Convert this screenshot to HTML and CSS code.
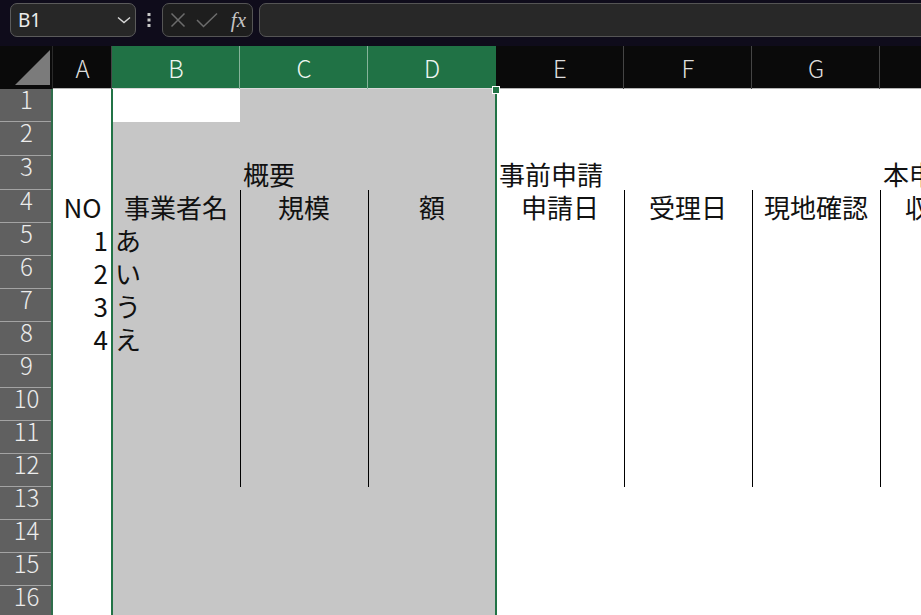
FILE: index.html
```html
<!DOCTYPE html>
<html lang="ja">
<head>
    <meta charset="UTF-8">
    <meta name="viewport" content="width=device-width, initial-scale=1.0">
    <title>Book1 - Excel</title>
    <link rel="stylesheet" href="styles.css">
</head>
<body>
    <div class="formula-bar">
        <div class="name-box">
            <span>B1</span>
            <svg class="chevron" width="14" height="8" viewBox="0 0 14 8"><path d="M1 1.5 L7 6.5 L13 1.5" fill="none" stroke="#d8d8d8" stroke-width="1.4"/></svg>
        </div>
        <div class="grip">
            <svg width="4" height="14" viewBox="0 0 4 14"><rect x="0.5" y="0" width="3" height="3" fill="#c9c9c9"/><rect x="0.5" y="5.5" width="3" height="3" fill="#c9c9c9"/><rect x="0.5" y="11" width="3" height="3" fill="#c9c9c9"/></svg>
        </div>
        <div class="fx-box">
            <svg width="16" height="16" viewBox="0 0 16 16"><path d="M1.5 1.5 L14.5 14.5 M14.5 1.5 L1.5 14.5" stroke="#6c6c6c" stroke-width="1.5"/></svg>
            <svg width="22" height="16" viewBox="0 0 22 16"><path d="M1 8 L7.5 14.5 L21 1.5" fill="none" stroke="#6c6c6c" stroke-width="1.5"/></svg>
            <span class="fx">fx</span>
        </div>
        <div class="formula-input"></div>
    </div>

    <div class="sheet">
        <table class="grid">
            <colgroup>
                <col class="w-head">
                <col class="w-a">
                <col class="w-col sel">
                <col class="w-col sel">
                <col class="w-col sel">
                <col class="w-col">
                <col class="w-col">
                <col class="w-col">
                <col class="w-col">
            </colgroup>
            <thead>
                <tr>
                    <th class="corner"><div class="corner-mark"></div></th>
                    <th>A</th>
                    <th class="on">B</th>
                    <th class="on">C</th>
                    <th class="on last-on">D</th>
                    <th>E</th>
                    <th>F</th>
                    <th>G</th>
                    <th>H</th>
                </tr>
            </thead>
            <tbody>
                <tr class="r-1"><th>1</th><td></td><td class="active"></td><td></td><td></td><td></td><td></td><td></td><td></td></tr>
                <tr class="r-2"><th>2</th><td></td><td></td><td></td><td></td><td></td><td></td><td></td><td></td></tr>
                <tr class="r-2"><th>3</th><td></td><td></td><td>概要</td><td></td><td>事前申請</td><td></td><td></td><td>本申請</td></tr>
                <tr><th>4</th><td class="mid">NO</td><td class="mid">事業者名</td><td class="mid bl">規模</td><td class="mid bl">額</td><td class="mid">申請日</td><td class="mid bl">受理日</td><td class="mid bl">現地確認</td><td class="mid bl">収受日</td></tr>
                <tr><th>5</th><td class="num">1</td><td>あ</td><td class="bl"></td><td class="bl"></td><td></td><td class="bl"></td><td class="bl"></td><td class="bl"></td></tr>
                <tr><th>6</th><td class="num">2</td><td>い</td><td class="bl"></td><td class="bl"></td><td></td><td class="bl"></td><td class="bl"></td><td class="bl"></td></tr>
                <tr><th>7</th><td class="num">3</td><td>う</td><td class="bl"></td><td class="bl"></td><td></td><td class="bl"></td><td class="bl"></td><td class="bl"></td></tr>
                <tr><th>8</th><td class="num">4</td><td>え</td><td class="bl"></td><td class="bl"></td><td></td><td class="bl"></td><td class="bl"></td><td class="bl"></td></tr>
                <tr><th>9</th><td></td><td></td><td class="bl"></td><td class="bl"></td><td></td><td class="bl"></td><td class="bl"></td><td class="bl"></td></tr>
                <tr><th>10</th><td></td><td></td><td class="bl"></td><td class="bl"></td><td></td><td class="bl"></td><td class="bl"></td><td class="bl"></td></tr>
                <tr><th>11</th><td></td><td></td><td class="bl"></td><td class="bl"></td><td></td><td class="bl"></td><td class="bl"></td><td class="bl"></td></tr>
                <tr><th>12</th><td></td><td></td><td class="bl"></td><td class="bl"></td><td></td><td class="bl"></td><td class="bl"></td><td class="bl"></td></tr>
                <tr><th>13</th><td></td><td></td><td></td><td></td><td></td><td></td><td></td><td></td></tr>
                <tr><th>14</th><td></td><td></td><td></td><td></td><td></td><td></td><td></td><td></td></tr>
                <tr><th>15</th><td></td><td></td><td></td><td></td><td></td><td></td><td></td><td></td></tr>
                <tr><th>16</th><td></td><td></td><td></td><td></td><td></td><td></td><td></td><td></td></tr>
            </tbody>
        </table>

        <!-- selected range B:D -->
        <div class="selection"><div class="fill-handle"></div></div>
    </div>
</body>
</html>
```

FILE: styles.css
```css
body {
    margin: 0;
    background: #0f0c1b;
    font-family: "Noto Sans CJK JP", "Noto Sans", sans-serif;
    overflow: hidden;
}

/* formula bar */
.formula-bar {
    display: flex;
    align-items: flex-start;
    height: 46px;
    box-sizing: border-box;
    padding: 3px 0 0 10px;
}

.name-box {
    width: 126px;
    height: 34px;
    box-sizing: border-box;
    display: flex;
    align-items: center;
    justify-content: space-between;
    padding: 0 4px 0 7px;
    background: #272727;
    border: 1px solid #5b5b5b;
    border-radius: 7px;
    color: #ececec;
    font-family: "Noto Sans", sans-serif;
    font-size: 19px;
}

.grip {
    width: 26px;
    height: 34px;
    display: flex;
    align-items: center;
    justify-content: center;
}

.fx-box {
    width: 91px;
    height: 34px;
    box-sizing: border-box;
    display: flex;
    align-items: center;
    gap: 10px;
    padding: 0 6px 0 7px;
    background: #1e1e1e;
    border: 1px solid #555;
    border-radius: 7px;
}

.fx {
    color: #c4c4c4;
    font-family: "Liberation Serif", serif;
    font-style: italic;
    font-size: 21px;
    line-height: 1;
    margin-left: auto;
}

.formula-input {
    flex: 1;
    height: 34px;
    margin: 0 -10px 0 6px;
    background: #282828;
    border: 1px solid #555;
    border-radius: 7px;
    box-sizing: border-box;
}

/* sheet */
.sheet {
    position: relative;
    width: 921px;
    height: 569px;
    overflow: hidden;
    background: #fff;
}

.grid {
    table-layout: fixed;
    border-collapse: collapse;
    width: 1008px;
}

.w-head { width: 53px; }
.w-a { width: 59px; }
.w-col { width: 128px; }
.sel { background: #c6c6c6; }

.grid thead tr { height: 43px; }

.grid thead th {
    padding: 0;
    background: #0a0a0a;
    color: #dedede;
    font-weight: 300;
    font-size: 24px;
    text-align: center;
    vertical-align: middle;
    box-shadow: inset -1px 0 #454545, inset 0 -1px #b5b5b5;
}

.grid thead th.on {
    background: #207245;
    color: #eef6f1;
    box-shadow: inset -1px 0 #86b39a, inset 0 -1px #d9d9d9;
}

.grid thead th.last-on {
    box-shadow: inset 0 -1px #d9d9d9;
}

.grid thead th.corner {
    vertical-align: bottom;
    box-shadow: inset -1px 0 #2a2a2a;
}

.corner-mark {
    width: 35px;
    height: 35px;
    margin: 0 0 4px 15px;
    background: #7b7b7b;
    clip-path: polygon(0 100%, 100% 0, 100% 100%);
}

.grid tbody tr { height: 33px; }
.grid tbody tr.r-2 { height: 34px; }

.grid tbody th {
    padding: 0;
    background: #606060;
    color: #ececec;
    font-weight: 300;
    font-size: 24px;
    line-height: 20px;
    text-align: center;
    vertical-align: top;
    box-shadow: inset -2px 0 #2f6d4b, inset 0 -1px #a3a3a3;
}

.grid td {
    padding: 0 3px 3px;
    color: #111;
    font-size: 26px;
    line-height: 26px;
    white-space: nowrap;
    vertical-align: bottom;
}

.grid td.active { background: #fff; }
.grid td.mid { text-align: center; }
.grid td.num { text-align: right; padding-right: 4px; }
.grid td.bl { box-shadow: inset 1px 0 #000; }

/* selection frame over columns B to D */
.selection {
    position: absolute;
    left: 111px;
    top: 43px;
    width: 382px;
    bottom: 0;
    border-left: 2px solid #217346;
    border-right: 2px solid #217346;
}

.fill-handle {
    position: absolute;
    right: -5px;
    top: -3px;
    width: 6px;
    height: 6px;
    background: #217346;
    border: 1px solid #fff;
}
```
